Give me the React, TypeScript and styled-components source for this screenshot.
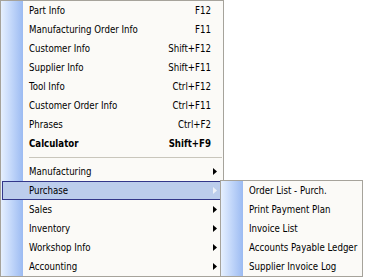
import React from 'react';
import styled, { createGlobalStyle, css } from 'styled-components';

const GlobalStyle = createGlobalStyle`
  html, body {
    margin: 0;
    padding: 0;
    background: #ffffff;
  }
  body {
    font-family: "DejaVu Sans Condensed", "Liberation Sans", Arial, sans-serif;
    font-size: 9.6px;
    color: #000000;
  }
`;

const Screen = styled.div`
  position: relative;
  width: 371px;
  height: 279px;
  overflow: hidden;
`;

const MenuPanel = styled.div<{ $width: number }>`
  box-sizing: border-box;
  width: ${p => p.$width}px;
  display: flex;
  flex-direction: column;
  border: 1px solid #a6a39b;
  background-color: #fbfaf7;
  background-image: linear-gradient(to right, #e6f0fe 0%, #c4d8fa 45%, #9cbbf2 100%);
  background-size: 22px 100%;
  background-repeat: no-repeat;
`;

// the flyout lies over the parent menu's right edge
const SubPanel = styled(MenuPanel)`
  position: absolute;
  left: 220px;
  top: 180px;
`;

const Row = styled.div<{ $active?: boolean; $bold?: boolean }>`
  box-sizing: border-box;
  height: 19px;
  display: flex;
  align-items: center;
  padding: 0 6px 0 28px;
  font-weight: ${p => (p.$bold ? 700 : 400)};
  white-space: nowrap;

  ${p =>
    p.$active &&
    css`
      margin: 0 1px;
      padding: 0 4px 0 26px;
      border: 1px solid #33378a;
      background: #bccdec;
    `}
`;

const Label = styled.span`
  flex: 1;
`;

const Shortcut = styled.span`
  margin-left: 12px;
`;

const ArrowSlot = styled.span`
  width: 4px;
  height: 7px;
  margin-left: 2px;
  display: flex;
`;

const Separator = styled.div`
  height: 9px;
  display: flex;
  align-items: center;
  padding: 0 1px 0 28px;

  &::after {
    content: '';
    flex: 1;
    height: 1px;
    background: #c9c6bc;
  }
`;

const Arrow = ({ light }: { light?: boolean }) => (
  <svg width="4" height="7" viewBox="0 0 4 7">
    <polygon points="0,0 4,3.5 0,7" fill={light ? '#eef1f8' : '#000000'} />
  </svg>
);

type Item = {
  label: string;
  shortcut?: string;
  bold?: boolean;
  sub?: boolean;
  active?: boolean;
};

const topItems: Item[] = [
  { label: 'Part Info', shortcut: 'F12' },
  { label: 'Manufacturing Order Info', shortcut: 'F11' },
  { label: 'Customer Info', shortcut: 'Shift+F12' },
  { label: 'Supplier Info', shortcut: 'Shift+F11' },
  { label: 'Tool Info', shortcut: 'Ctrl+F12' },
  { label: 'Customer Order Info', shortcut: 'Ctrl+F11' },
  { label: 'Phrases', shortcut: 'Ctrl+F2' },
  { label: 'Calculator', shortcut: 'Shift+F9', bold: true },
];

const moduleItems: Item[] = [
  { label: 'Manufacturing', sub: true },
  { label: 'Purchase', sub: true, active: true },
  { label: 'Sales', sub: true },
  { label: 'Inventory', sub: true },
  { label: 'Workshop Info', sub: true },
  { label: 'Accounting', sub: true },
];

const purchaseItems = [
  'Order List - Purch.',
  'Print Payment Plan',
  'Invoice List',
  'Accounts Payable Ledger',
  'Supplier Invoice Log',
];

const MenuRow = ({ item }: { item: Item }) => (
  <Row $active={item.active} $bold={item.bold}>
    <Label>{item.label}</Label>
    {item.shortcut && <Shortcut>{item.shortcut}</Shortcut>}
    <ArrowSlot>{item.sub && <Arrow light={item.active} />}</ArrowSlot>
  </Row>
);

export default function App() {
  return (
    <Screen>
      <GlobalStyle />
      <MenuPanel $width={224}>
        {topItems.map(item => (
          <MenuRow key={item.label} item={item} />
        ))}
        <Separator />
        {moduleItems.map(item => (
          <MenuRow key={item.label} item={item} />
        ))}
      </MenuPanel>

      <SubPanel $width={143}>
        {purchaseItems.map(label => (
          <Row key={label}>
            <Label>{label}</Label>
          </Row>
        ))}
      </SubPanel>
    </Screen>
  );
}
